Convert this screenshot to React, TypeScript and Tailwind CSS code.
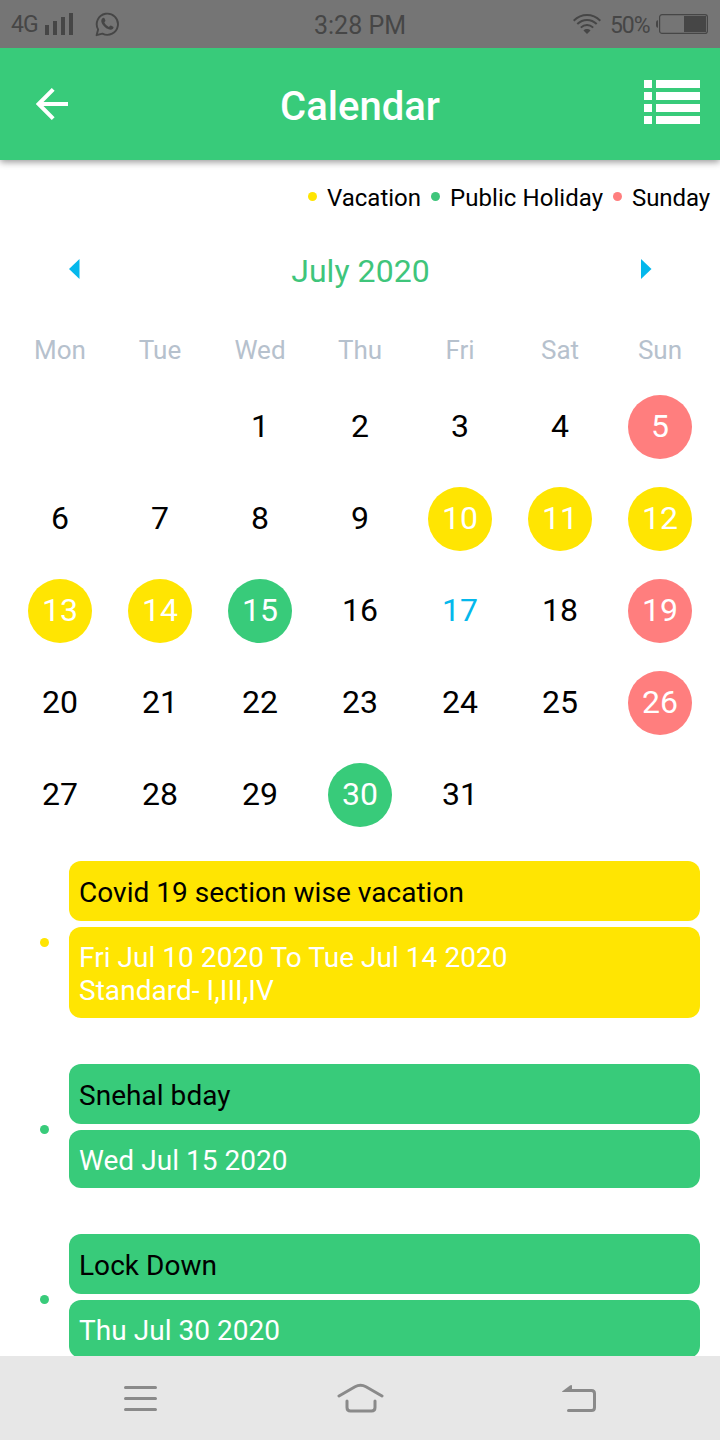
type Mark = 'vacation' | 'holiday' | 'sunday' | 'today';

const markClass: Record<Mark, string> = {
  vacation: 'bg-[#ffe502] text-white',
  holiday: 'bg-[#38cb7a] text-white',
  sunday: 'bg-[#ff7e7e] text-white',
  today: 'text-[#04b8ec]',
};

const marks: Record<number, Mark> = {
  5: 'sunday', 10: 'vacation', 11: 'vacation', 12: 'vacation', 13: 'vacation', 14: 'vacation',
  15: 'holiday', 17: 'today', 19: 'sunday', 26: 'sunday', 30: 'holiday',
};

const weekdays = ['Mon', 'Tue', 'Wed', 'Thu', 'Fri', 'Sat', 'Sun'];
const days = Array.from({ length: 31 }, (_, i) => i + 1);

const legend = [
  { label: 'Vacation', dot: 'bg-[#ffe502]', width: 'w-[94px]' },
  { label: 'Public Holiday', dot: 'bg-[#3fc57b]', width: 'w-[153px] tracking-[0.06px]' },
  { label: 'Sunday', dot: 'bg-[#ff7e7e]', width: 'w-[78px] tracking-[-0.06px]' },
];

const events = [
  { title: 'Covid 19 section wise vacation', lines: ['Fri Jul 10 2020 To Tue Jul 14 2020', 'Standard- I,III,IV'], bg: 'bg-[#ffe502]', height: 'h-[91px]', dotOffset: 'mt-[5px]' },
  { title: 'Snehal bday', lines: ['Wed Jul 15 2020'], bg: 'bg-[#38cb7a]', height: 'h-[58px]', dotOffset: 'mt-[7px]' },
  { title: 'Lock Down', lines: ['Thu Jul 30 2020'], bg: 'bg-[#38cb7a]', height: 'h-[58px]', dotOffset: 'mt-[7px]' },
];

function StatusBar() {
  return (
    <div className="z-20 grid h-12 shrink-0 grid-cols-3 bg-[#757575] text-[#464646]">
      <div className="flex items-center pl-[11px]">
        <span className="w-[34px] pt-px text-[23px] leading-6 tracking-[-1px]">4G</span>
        <svg width="28" height="22" viewBox="0 0 28 22" fill="currentColor">
          <path d="M0 12h4v10H0zM8 8h4v14H8zM16 4h4v18h-4zM24 0h4v22h-4z" />
        </svg>
        <svg className="ml-[22px]" width="25" height="25" viewBox="0 0 25 25" fill="none">
          <path d="M1.600 23.200 3.100 17.400A10.600 10.600 0 1 1 7.400 21.600Z" stroke="currentColor" strokeWidth="1.900" strokeLinejoin="round" />
          <path d="M7.200 6.400C8 5.500 9 5.300 9.500 6.300L10.400 8.600C10.600 9.300 9.500 10.100 9.400 10.600C9.900 12.300 12 14.300 13.900 14.900C14.600 14.800 15.200 13.500 15.900 13.600L18.200 14.800C18.900 15.200 18.400 16.400 17.700 17C16.800 17.700 15.300 17.900 13.700 17.300C10.400 16.100 7.200 12.700 6.400 9.900C6.100 8.600 6.400 7.300 7.200 6.400Z" fill="currentColor" />
        </svg>
      </div>
      <div className="flex items-center justify-center pt-[3px] text-[25px]">3:28 PM</div>
      <div className="flex items-center justify-end pr-3">
        <svg width="28" height="20" viewBox="0 0 28 20" fill="none" stroke="currentColor" strokeWidth="2">
          <path d="M.7 6.700C8.700-.8 19.300-.8 27.300 6.700M4.300 10C10 4.500 18 4.500 23.700 10M7.800 13.600C11.500 10 16.500 10 20.200 13.600" />
          <path d="M10.500 16.500C12.500 14.600 15.500 14.600 17.500 16.500L14 20Z" fill="currentColor" stroke="none" />
        </svg>
        <span className="ml-[9px] w-[46px] pt-[3px] text-[23px] leading-6 tracking-[-1.100px]">50%</span>
        <svg width="52" height="20" viewBox="0 0 52 20" fill="none">
          <path d="M2 6.200C.2 6.200 0 7.500 0 10s.2 3.800 2 3.800z" fill="currentColor" />
          <rect x="3.600" y=".6" width="47.800" height="18.800" rx="2.500" stroke="currentColor" strokeWidth="1.200" />
          <path d="M28 2h22v16H28z" fill="currentColor" />
        </svg>
      </div>
    </div>
  );
}

function Header() {
  return (
    <header className="z-10 grid h-28 shrink-0 grid-cols-[120px_1fr_120px] items-center bg-[#38cb7a] text-white shadow-[0_2px_7px_rgba(0,0,0,0.42)]">
      <svg className="ml-9" width="32" height="32" viewBox="0 0 32 32" fill="none" stroke="currentColor" strokeWidth="4">
        <path d="M32 16H4M17.200 1.400 2.600 16l14.600 14.600" />
      </svg>
      <h1 className="pt-[5px] text-center text-[40px] leading-[48px] font-medium">Calendar</h1>
      <svg className="mr-5 mb-1 justify-self-end" width="56" height="44" viewBox="0 0 56 44" fill="currentColor">
        <path d="M0 0h8v8H0zM12 0h44v8H12zM0 12h8v8H0zM12 12h44v8H12zM0 24h8v8H0zM12 24h44v8H12zM0 36h8v8H0zM12 36h44v8H12z" />
      </svg>
    </header>
  );
}

export default function App() {
  return (
    <div className="flex h-[1440px] w-[720px] flex-col overflow-hidden bg-white font-[Roboto,sans-serif] text-black">
      <StatusBar />
      <Header />
      <main className="min-h-0 flex-1 overflow-hidden">
        <div className="flex h-[72px] items-center justify-end gap-[10px] pt-1 pr-[10px]">
          {legend.map((item) => (
            <div key={item.label} className="flex items-center gap-[10px]">
              <span className={`mb-[3px] size-[9px] rounded-full ${item.dot}`} />
              <span className={`text-2xl leading-7 whitespace-nowrap ${item.width}`}>{item.label}</span>
            </div>
          ))}
        </div>
        <div className="flex h-[76px] items-center justify-between pr-[68px] pl-[69px]">
          <svg className="mb-[2px]" width="11" height="20" viewBox="0 0 11 20" fill="#04b8ec"><path d="M10.500 0v20L0 10z" /></svg>
          <span className="pt-px text-[32px] leading-[38px] tracking-[0.05px] text-[#3fc57b]">July 2020</span>
          <svg className="mb-[2px]" width="11" height="20" viewBox="0 0 11 20" fill="#04b8ec"><path d="M0 0v20l10.500-10z" /></svg>
        </div>
        <div className="grid grid-cols-7 px-[10px] pt-[27px] text-center text-[26px] leading-[30px] text-[#b6c1cd]">
          {weekdays.map((day) => <span key={day}>{day}</span>)}
        </div>
        <div className="mt-[30px] grid grid-cols-7 justify-items-center gap-y-7 px-[10px]">
          {days.map((day) => (
            <div
              key={day}
              className={`flex size-16 items-center justify-center rounded-full pb-[2px] text-[32px] leading-[38px] ${day === 1 ? 'col-start-3' : ''} ${marks[day] ? markClass[marks[day]] : ''}`}
            >
              {day}
            </div>
          ))}
        </div>
        <div className="mt-[34px] flex flex-col gap-[46px] pr-5">
          {events.map((event) => (
            <section key={event.title} className="flex items-center">
              <span className={`mr-5 ml-10 size-[9px] shrink-0 rounded-full ${event.dotOffset} ${event.bg}`} />
              <div className="flex flex-1 flex-col gap-[6px] text-[28px] leading-[33px] tracking-[0.04px]">
                <h2 className={`h-[60px] rounded-xl px-[10px] pt-[15px] ${event.bg}`}>{event.title}</h2>
                <div className={`rounded-xl px-[10px] pt-[14px] text-white ${event.height} ${event.bg}`}>
                  {event.lines.map((line) => <p key={line}>{line}</p>)}
                </div>
              </div>
            </section>
          ))}
        </div>
      </main>
      <nav className="z-10 flex h-[84px] shrink-0 items-center justify-between bg-[#e7e7e7] pr-[123px] pl-[124px] text-[#8a8a8a]">
        <svg width="33" height="26" viewBox="0 0 33 26" fill="none" stroke="currentColor" strokeWidth="3" strokeLinecap="round">
          <path d="M1.500 2.500h30M1.500 13.500h30M1.500 24.500h30" />
        </svg>
        <svg className="ml-[2px]" width="48" height="30" viewBox="0 0 48 30" fill="none" stroke="currentColor" strokeWidth="3" strokeLinecap="round">
          <path d="M2 13 18 3.800Q23.500 .8 29 3.800L45 13M10 18V24.500Q10 28 13.500 28H34.500Q38 28 38 24.500V18" />
        </svg>
        <svg width="35" height="28" viewBox="0 0 35 28" fill="none">
          <path d="M5 6.500H29.500Q32.500 6.500 32.500 9.500V23.500Q32.500 26.500 29.500 26.500H6.500" stroke="currentColor" strokeWidth="3" strokeLinecap="round" />
          <path d="M0 7.500 8 1.500Q10 .5 10 2V8H1Q0 8 0 7.500Z" fill="currentColor" />
        </svg>
      </nav>
    </div>
  );
}
